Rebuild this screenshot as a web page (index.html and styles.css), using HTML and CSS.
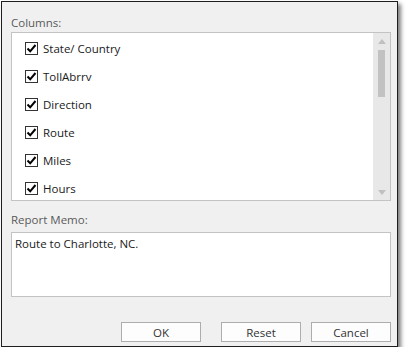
FILE: index.html
```html
<!DOCTYPE html>
<html lang="en">
<head>
    <meta charset="UTF-8">
    <meta name="viewport" content="width=device-width, initial-scale=1.0">
    <title>Report Options</title>
    <link rel="stylesheet" href="styles.css">
</head>
<body>
    <div class="dialog">
        <div class="field-label">Columns:</div>
        <div class="listbox">
            <ul class="column-list">
                <li><span class="check"><svg viewBox="0 0 11 11"><path d="M1.5 5.5 L4.2 8.3 L9.5 2"/></svg></span>State/ Country</li>
                <li><span class="check"><svg viewBox="0 0 11 11"><path d="M1.5 5.5 L4.2 8.3 L9.5 2"/></svg></span>TollAbrrv</li>
                <li><span class="check"><svg viewBox="0 0 11 11"><path d="M1.5 5.5 L4.2 8.3 L9.5 2"/></svg></span>Direction</li>
                <li><span class="check"><svg viewBox="0 0 11 11"><path d="M1.5 5.5 L4.2 8.3 L9.5 2"/></svg></span>Route</li>
                <li><span class="check"><svg viewBox="0 0 11 11"><path d="M1.5 5.5 L4.2 8.3 L9.5 2"/></svg></span>Miles</li>
                <li><span class="check"><svg viewBox="0 0 11 11"><path d="M1.5 5.5 L4.2 8.3 L9.5 2"/></svg></span>Hours</li>
            </ul>
            <div class="scrollbar">
                <span class="arrow up"></span>
                <div class="track"><div class="thumb"></div></div>
                <span class="arrow down"></span>
            </div>
        </div>
        <div class="field-label memo-label">Report Memo:</div>
        <div class="memo">Route to Charlotte, NC.</div>
        <div class="buttons">
            <button class="btn ok">OK</button>
            <button class="btn reset">Reset</button>
            <button class="btn">Cancel</button>
        </div>
    </div>
</body>
</html>
```

FILE: styles.css
```css
body {
    margin: 0;
    background-color: #fff;
    font-family: "Open Sans", "Noto Sans", sans-serif;
    font-size: 11.5px;
}
.dialog {
    box-sizing: border-box;
    width: 397px;
    height: 346px;
    margin: 1px 0 0 1px;
    padding: 12px 6px 0 9px;
    background-color: #f0f0f0;
    border: 1px solid #1e1e1e;
    box-shadow: 3px 3px 4px rgba(0, 0, 0, 0.5);
}
.field-label {
    line-height: 18px;
    color: #5a5a5a;
}
.memo-label {
    margin-top: 10px;
    margin-bottom: 3px;
}
.listbox {
    display: flex;
    height: 169px;
    box-sizing: border-box;
    background-color: #fff;
    border: 1px solid #c3c3c3;
}
.column-list {
    flex: 1;
    list-style: none;
    margin: 0;
    padding: 1px 0 0 13px;
    overflow: hidden;
}
.column-list li {
    display: flex;
    align-items: center;
    height: 28px;
    color: #1a1a1a;
}
.check {
    box-sizing: border-box;
    width: 13px;
    height: 13px;
    margin-right: 5px;
    border: 1px solid #333;
    background-color: #fff;
    display: flex;
    align-items: center;
    justify-content: center;
}
.check svg {
    width: 11px;
    height: 11px;
}
.check path {
    fill: none;
    stroke: #000;
    stroke-width: 2;
}
.scrollbar {
    width: 17px;
    background-color: #e8e8e8;
    display: flex;
    flex-direction: column;
    align-items: center;
    padding: 6px 0 5px;
    box-sizing: border-box;
}
.arrow {
    width: 0;
    height: 0;
    border-left: 4px solid transparent;
    border-right: 4px solid transparent;
}
.arrow.up {
    border-bottom: 5px solid #c0c0c0;
}
.arrow.down {
    border-top: 5px solid #c0c0c0;
}
.track {
    flex: 1;
    width: 100%;
    display: flex;
    justify-content: center;
    padding-top: 6px;
}
.thumb {
    width: 7px;
    height: 47px;
    background-color: #c2c2c2;
}
.memo {
    box-sizing: border-box;
    height: 65px;
    padding: 2px 3px;
    background-color: #fff;
    border: 1px solid #c3c3c3;
    color: #1a1a1a;
    line-height: 18px;
}
.buttons {
    display: flex;
    justify-content: flex-end;
    margin-top: 25px;
}
.btn {
    box-sizing: border-box;
    width: 80px;
    height: 20px;
    padding: 0;
    margin-left: 10px;
    font-family: inherit;
    font-size: 11.5px;
    color: #333;
    background-color: #fdfdfd;
    border: 1px solid #adadad;
}
.btn.ok {
    margin-left: 0;
}
.btn.reset {
    margin-left: 20px;
}
```
